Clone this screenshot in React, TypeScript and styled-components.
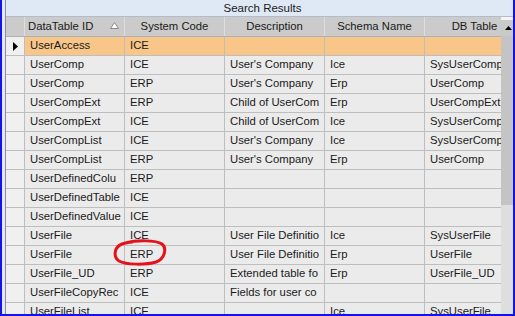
import styled, { createGlobalStyle } from "styled-components";

type Row = {
  id: string;
  sys: string;
  desc?: string;
  schema?: string;
  table?: string;
};

// grid text is cut to the column's field width, as the app shows it
const rows: Row[] = [
  { id: "UserAccess", sys: "ICE" },
  { id: "UserComp", sys: "ICE", desc: "User's Company", schema: "Ice", table: "SysUserComp" },
  { id: "UserComp", sys: "ERP", desc: "User's Company", schema: "Erp", table: "UserComp" },
  { id: "UserCompExt", sys: "ERP", desc: "Child of UserCom", schema: "Erp", table: "UserCompExt" },
  { id: "UserCompExt", sys: "ICE", desc: "Child of UserCom", schema: "Ice", table: "SysUserComp" },
  { id: "UserCompList", sys: "ICE", desc: "User's Company", schema: "Ice", table: "SysUserComp" },
  { id: "UserCompList", sys: "ERP", desc: "User's Company", schema: "Erp", table: "UserComp" },
  { id: "UserDefinedColu", sys: "ERP" },
  { id: "UserDefinedTable", sys: "ICE" },
  { id: "UserDefinedValue", sys: "ICE" },
  { id: "UserFile", sys: "ICE", desc: "User File Definitio", schema: "Ice", table: "SysUserFile" },
  { id: "UserFile", sys: "ERP", desc: "User File Definitio", schema: "Erp", table: "UserFile" },
  { id: "UserFile_UD", sys: "ERP", desc: "Extended table fo", schema: "Erp", table: "UserFile_UD" },
  { id: "UserFileCopyRec", sys: "ICE", desc: "Fields for user co" },
  { id: "UserFileList", sys: "ICE", schema: "Ice", table: "SysUserFile" },
];

const columns = ["DataTable ID", "System Code", "Description", "Schema Name", "DB Table"];

const GlobalStyle = createGlobalStyle`
  html, body {
    margin: 0;
    padding: 0;
    background: #fff;
  }
  body {
    font-family: "Liberation Sans", Arial, sans-serif;
  }
`;

function App() {
  return (
    <Frame>
      <GlobalStyle />
      <BackStrip />
      <Panel>
        <TitleBar>Search Results</TitleBar>
        <Body>
          <Grid>
            <HeaderRow>
              <RowHeadCell head />
              {columns.map((c, i) => (
                <HeadCell key={c} first={i === 0}>
                  {c}
                  {i === 0 && (
                    <SortMark width="9" height="7" viewBox="0 0 9 7">
                      <path d="M4.5 0.5 L8.5 6.5 L0.5 6.5 Z" fill="#fff" stroke="#8a8a8a" />
                    </SortMark>
                  )}
                </HeadCell>
              ))}
            </HeaderRow>
            {rows.map((r, idx) => (
              <DataRow key={idx} selected={idx === 0}>
                <RowHeadCell>
                  {idx === 0 && (
                    <svg width="6" height="9" viewBox="0 0 6 9">
                      <path d="M0 0 L5 4.5 L0 9 Z" fill="#000" />
                    </svg>
                  )}
                </RowHeadCell>
                <Cell>{r.id}</Cell>
                <Cell>{r.sys}</Cell>
                <Cell>{r.desc}</Cell>
                <Cell>{r.schema}</Cell>
                <Cell>{r.table}</Cell>
              </DataRow>
            ))}
          </Grid>
          <ScrollBar>
            <ScrollButton>
              <svg width="7" height="4" viewBox="0 0 7 4">
                <path d="M0 4 L3.5 0 L7 4 Z" fill="#000" />
              </svg>
            </ScrollButton>
            <ScrollThumb />
          </ScrollBar>
        </Body>
      </Panel>
      <Circle width="56" height="28" viewBox="0 0 56 28">
        <path
          d="M14 4 C24 1 44 1 50 5 C55 9 53 20 44 23 C34 26 14 26 7 22 C1 18 2 8 10 5 C13 4 17 3 20 3"
          fill="none"
          stroke="#e3121b"
          strokeWidth="3"
          strokeLinecap="round"
        />
      </Circle>
    </Frame>
  );
}

const Frame = styled.div`
  position: relative;
  width: 515px;
  height: 316px;
  box-sizing: border-box;
  border-left: 2px solid #1414e6;
  border-right: 2px solid #1414e6;
  border-bottom: 2px solid #1414e6;
  display: flex;
  overflow: hidden;
  background: #fff;
`;

const BackStrip = styled.div`
  width: 3px;
  background: #e6e6f4;
`;

const Panel = styled.div`
  flex: 1;
  min-width: 0;
  display: flex;
  flex-direction: column;
  border-left: 1px solid #7f8cb8;
`;

const TitleBar = styled.div`
  height: 16px;
  line-height: 16px;
  border-bottom: 1px solid #b4bccb;
  background: #dfe8f5;
  color: #1b1b1b;
  font-size: 11.5px;
  text-align: center;
  padding-left: 6px;
`;

const Body = styled.div`
  flex: 1;
  display: flex;
  min-height: 0;
`;

const Grid = styled.div`
  flex: 1;
  min-width: 0;
  overflow: hidden;
  background: #ebebeb;
`;

const HeaderRow = styled.div`
  display: grid;
  grid-template-columns: 19px repeat(5, 100px);
  height: 20px;
  background: #cbcbcb;
  border-bottom: 1px solid #b0b0b0;
  box-sizing: border-box;
`;

const HeadCell = styled.div<{ first?: boolean }>`
  position: relative;
  box-sizing: border-box;
  border-right: 1px solid #dedede;
  font-size: 11.3px;
  line-height: 19px;
  color: #1a1a1a;
  white-space: nowrap;
  overflow: hidden;
  text-align: ${(p) => (p.first ? "left" : "center")};
  padding-left: ${(p) => (p.first ? "3px" : "0")};
`;

const SortMark = styled.svg`
  position: absolute;
  right: 5px;
  top: 5px;
`;

const DataRow = styled.div<{ selected?: boolean }>`
  display: grid;
  grid-template-columns: 19px repeat(5, 100px);
  height: 19px;
  box-sizing: border-box;
  border-bottom: 1px solid #bebebe;
  background: ${(p) => (p.selected ? "#f9c689" : "#ebebeb")};
`;

const RowHeadCell = styled.div<{ head?: boolean }>`
  box-sizing: border-box;
  border-right: 1px solid ${(p) => (p.head ? "#dedede" : "#bebebe")};
  background: ${(p) => (p.head ? "#cbcbcb" : "#f0f0f0")};
  display: flex;
  align-items: center;
  padding-left: 7px;
`;

const Cell = styled.div`
  box-sizing: border-box;
  border-right: 1px solid #bebebe;
  padding-left: 5px;
  font-size: 11.3px;
  line-height: 17px;
  color: #1a1a1a;
  white-space: nowrap;
  overflow: hidden;
`;

const ScrollBar = styled.div`
  width: 12px;
  display: flex;
  flex-direction: column;
  background: #dedede;
`;

const ScrollButton = styled.div`
  height: 19px;
  box-sizing: border-box;
  border-top: 3px solid #f4f4f4;
  background: #c9c9c9;
  display: flex;
  align-items: center;
  justify-content: center;
  padding-left: 2px;
`;

const ScrollThumb = styled.div`
  height: 169px;
  background: #c4c4c4;
`;

const Circle = styled.svg`
  position: absolute;
  left: 110px;
  top: 239px;
`;

export default App;
